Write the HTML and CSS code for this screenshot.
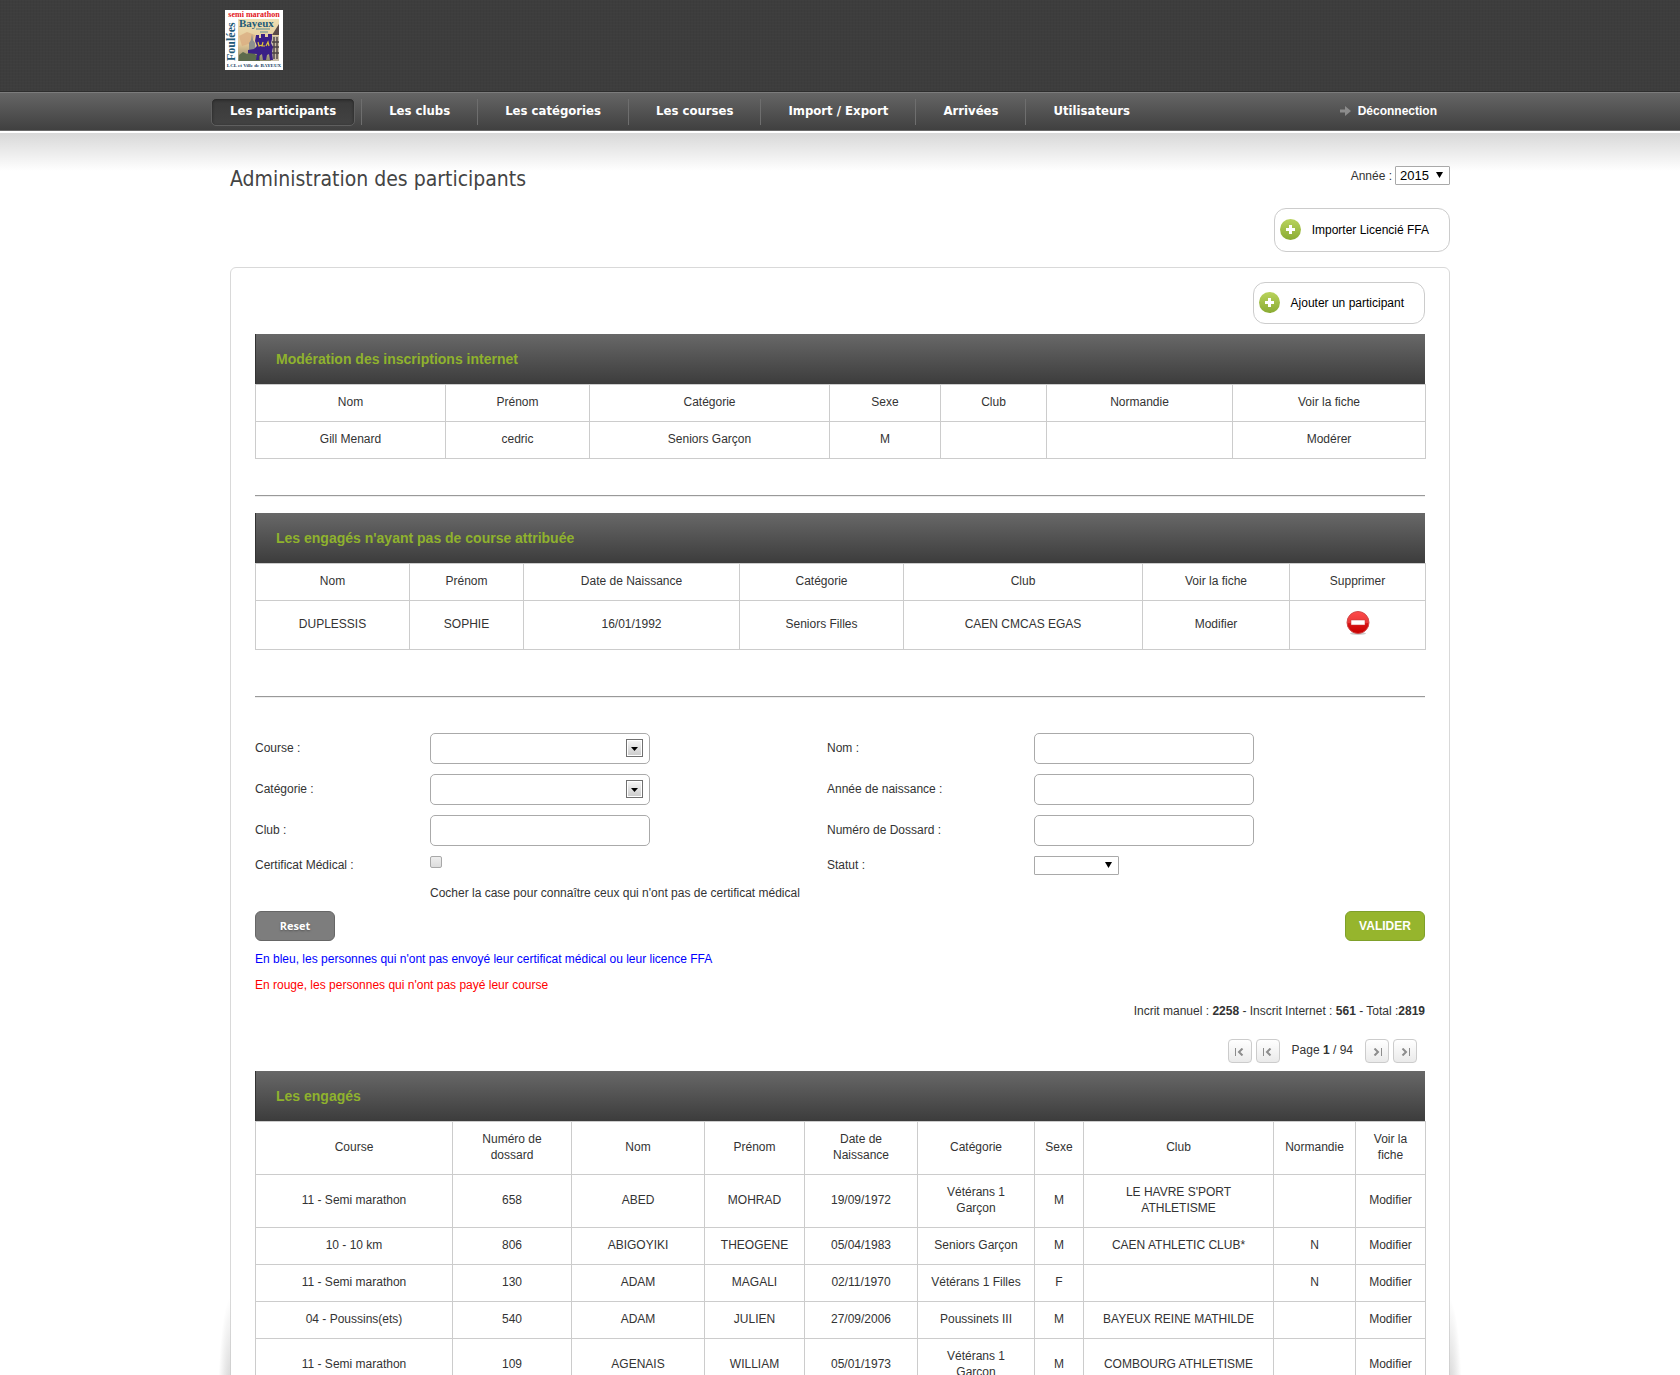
FILE: index.html
```html
<!DOCTYPE html>
<html lang="fr">
<head>
<meta charset="utf-8">
<meta name="viewport" content="width=device-width, initial-scale=1">
<title>Administration des participants</title>
<link rel="stylesheet" href="styles.css">
</head>
<body>
<div class="page">
  <header class="banner">
    <div class="wrap banner-inner">
      <a href="#" class="logo" aria-label="Foulées de Bayeux">
        <svg width="58" height="60" viewBox="0 0 58 60">
          <defs>
            <linearGradient id="sky" x1="0" y1="0" x2="0" y2="1"><stop offset="0" stop-color="#efe0b4"/><stop offset=".6" stop-color="#e3c896"/><stop offset="1" stop-color="#8d8a6c"/></linearGradient>
          </defs>
          <rect width="58" height="60" fill="#fff"/>
          <rect x="13" y="9" width="41" height="42" fill="url(#sky)"/>
          <path d="M14 26l8-4 8 3-3 8-10 3z" fill="#d9a97f" opacity=".7"/>
          <path d="M54 14l-7 11h7z" fill="#5b4a48"/>
          <path d="M46 26h8v25h-8z" fill="#c9bda6"/>
          <path d="M47 32h7M47 37h7M49 27v22M52 27v22M46 43h8" stroke="#4b4144" stroke-width="1.4"/>
          <path d="M27 24l1 6 2 3v12h-6V33l2-3z" fill="#8c8f8f"/>
          <path d="M14 45l4-3 4 2 4-3 5 4 4-2v8H14z" fill="#5c6a4c"/>
          <path d="M31 25h3v3h2v-4h4v3h3v-3h4v5l-1 4 2 4-1 5 1 8h-3l-1-6-2 1-1 5h-3l-1-6-3 2v4h-3l1-6-9-1v-3l6-1 3-3-2-5z" fill="#3a1f86"/>
          <path d="M33 32l1 4 3-1M38 32l-1 4h3M41 36l2-4 1 4" stroke="#e0c23a" fill="none" stroke-width="1.2"/>
          <path d="M31 19h14M35 22h8" stroke="#5f8b92" stroke-width="1"/>
          <text x="29" y="7" class="logo-top">semi marathon</text>
          <text x="14" y="17" class="logo-town">Bayeux</text>
          <text transform="translate(10 51) rotate(-90)" class="logo-side">Foulées</text>
          <text x="29" y="57" class="logo-foot">LCL et Ville de BAYEUX</text>
        </svg>
      </a>
    </div>
  </header>

  <div class="navbar">
    <div class="nav-inner">
      <nav aria-label="Menu principal">
        <ul class="menu">
          <li><a href="#" class="current" aria-current="page">Les participants</a></li>
          <li><a href="#">Les clubs</a></li>
          <li><a href="#">Les catégories</a></li>
          <li><a href="#">Les courses</a></li>
          <li><a href="#">Import / Export</a></li>
          <li><a href="#">Arrivées</a></li>
          <li><a href="#">Utilisateurs</a></li>
        </ul>
      </nav>
      <a href="#" class="logout">
        <svg width="11" height="10" viewBox="0 0 11 10" aria-hidden="true"><path d="M0 3.500h5V0l6 5-6 5V6.500H0z" fill="#8c8c8c"/></svg>
        Déconnection
      </a>
    </div>
  </div>

  <main class="content">
    <div class="wrap">
      <div class="page-head">
        <h1>Administration des participants</h1>
        <div class="year">
          <label for="annee">Année :</label>
          <select id="annee" class="mini year-select"><option>2015</option></select>
        </div>
      </div>
      <div class="actions actions-top">
        <a href="#" class="add add-tall">
          <svg class="plus" width="21" height="21" viewBox="0 0 21 21" aria-hidden="true">
            <defs><linearGradient id="leaf" x1="0" y1="0" x2="0" y2="1"><stop offset="0" stop-color="#b9d35c"/><stop offset="1" stop-color="#8aab33"/></linearGradient></defs>
            <circle cx="10.500" cy="10.500" r="10.500" fill="url(#leaf)"/><path d="M9 6h3v3h3v3h-3v3H9v-3H6V9h3z" fill="#fff"/>
          </svg>
          Importer Licencié FFA
        </a>
      </div>

      <section class="panel">
        <div class="actions">
          <a href="#" class="add">
            <svg class="plus" width="21" height="21" viewBox="0 0 21 21" aria-hidden="true">
              <circle cx="10.500" cy="10.500" r="10.500" fill="url(#leaf)"/><path d="M9 6h3v3h3v3h-3v3H9v-3H6V9h3z" fill="#fff"/>
            </svg>
            Ajouter un participant
          </a>
        </div>

        <h2 id="t-moderation" class="bar">Modération des inscriptions internet</h2>
        <table class="grid" aria-labelledby="t-moderation">
          <colgroup><col class="w190"><col class="w144"><col class="w240"><col class="w111"><col class="w106"><col class="w186"><col class="w193"></colgroup>
          <thead><tr><th>Nom</th><th>Prénom</th><th>Catégorie</th><th>Sexe</th><th>Club</th><th>Normandie</th><th>Voir la fiche</th></tr></thead>
          <tbody><tr><td>Gill Menard</td><td>cedric</td><td>Seniors Garçon</td><td>M</td><td></td><td></td><td><a href="#">Modérer</a></td></tr></tbody>
        </table>

        <hr class="rule">

        <h2 id="t-sans-course" class="bar">Les engagés n'ayant pas de course attribuée</h2>
        <table class="grid" aria-labelledby="t-sans-course">
          <colgroup><col class="w154"><col class="w114"><col class="w216"><col class="w164"><col class="w239"><col class="w147"><col class="w136"></colgroup>
          <thead><tr><th>Nom</th><th>Prénom</th><th>Date de Naissance</th><th>Catégorie</th><th>Club</th><th>Voir la fiche</th><th>Supprimer</th></tr></thead>
          <tbody><tr><td>DUPLESSIS</td><td>SOPHIE</td><td>16/01/1992</td><td>Seniors Filles</td><td>CAEN CMCAS EGAS</td><td><a href="#">Modifier</a></td>
            <td><button type="button" class="delete" aria-label="Supprimer">
              <svg width="24" height="24" viewBox="0 0 24 24" aria-hidden="true">
                <defs><linearGradient id="stop" x1="0" y1="0" x2="0" y2="1"><stop offset="0" stop-color="#ff4a4a"/><stop offset=".5" stop-color="#e93a3a"/><stop offset=".55" stop-color="#d81414"/><stop offset="1" stop-color="#c80000"/></linearGradient></defs>
                <ellipse cx="12" cy="22.500" rx="8" ry="1.500" fill="#000" opacity=".2"/>
                <circle cx="12" cy="11.500" r="11" fill="url(#stop)" stroke="#d04a4a" stroke-width="1"/>
                <rect x="5" y="9" width="14" height="5" fill="#fff" stroke="#c33" stroke-width=".5"/>
              </svg></button></td></tr></tbody>
        </table>

        <hr class="rule rule-wide">

        <form class="search">
          <div class="fields">
            <label for="course">Course :</label>
            <select id="course" class="field pick"><option></option></select>
            <label for="nom">Nom :</label>
            <input id="nom" class="field" type="text">
            <label for="categorie">Catégorie :</label>
            <select id="categorie" class="field pick"><option></option></select>
            <label for="naissance">Année de naissance :</label>
            <input id="naissance" class="field" type="text">
            <label for="club">Club :</label>
            <input id="club" class="field" type="text">
            <label for="dossard">Numéro de Dossard :</label>
            <input id="dossard" class="field" type="text">
            <label for="certificat">Certificat Médical :</label>
            <input id="certificat" class="tick" type="checkbox" aria-describedby="aide-certificat">
            <label for="statut">Statut :</label>
            <select id="statut" class="mini status-select"><option></option></select>
            <p id="aide-certificat" class="hint">Cocher la case pour connaître ceux qui n'ont pas de certificat médical</p>
          </div>
          <div class="buttons">
            <button type="reset" class="btn btn-reset">Reset</button>
            <button type="submit" class="btn btn-submit">VALIDER</button>
          </div>
        </form>

        <div class="notes">
          <p class="blue">En bleu, les personnes qui n'ont pas envoyé leur certificat médical ou leur licence FFA</p>
          <p class="red">En rouge, les personnes qui n'ont pas payé leur course</p>
          <p class="totals">Incrit manuel : <b>2258</b> - Inscrit Internet : <b>561</b> - Total :<b>2819</b></p>
        </div>

        <nav class="pager" aria-label="Pagination">
          <button type="button" aria-label="Première page"><svg width="9" height="8" viewBox="0 0 9 8"><path class="stem" d="M.5 0v8"/><path d="M7.500 .5L4 4l3.500 3.500"/></svg></button>
          <button type="button" aria-label="Page précédente"><svg width="9" height="8" viewBox="0 0 9 8"><path class="stem" d="M.5 0v8"/><path d="M7.500 .5L4 4l3.500 3.500"/></svg></button>
          <span class="page-no">Page <b>1</b> / 94</span>
          <button type="button" aria-label="Page suivante"><svg width="9" height="8" viewBox="0 0 9 8"><path class="stem" d="M8.500 0v8"/><path d="M1.500 .5L5 4 1.500 7.500"/></svg></button>
          <button type="button" aria-label="Dernière page"><svg width="9" height="8" viewBox="0 0 9 8"><path class="stem" d="M8.500 0v8"/><path d="M1.500 .5L5 4 1.500 7.500"/></svg></button>
        </nav>

        <h2 id="t-engages" class="bar">Les engagés</h2>
        <table class="grid" aria-labelledby="t-engages">
          <colgroup><col class="w197"><col class="w119"><col class="w133"><col class="w100"><col class="w113"><col class="w117"><col class="w49"><col class="w190"><col class="w82"><col class="w70"></colgroup>
          <thead><tr><th>Course</th><th>Numéro de dossard</th><th>Nom</th><th>Prénom</th><th>Date de Naissance</th><th>Catégorie</th><th>Sexe</th><th>Club</th><th>Normandie</th><th>Voir la fiche</th></tr></thead>
          <tbody>
            <tr><td>11 - Semi marathon</td><td>658</td><td>ABED</td><td>MOHRAD</td><td>19/09/1972</td><td>Vétérans 1 Garçon</td><td>M</td><td>LE HAVRE S'PORT ATHLETISME</td><td></td><td><a href="#">Modifier</a></td></tr>
            <tr><td>10 - 10 km</td><td>806</td><td>ABIGOYIKI</td><td>THEOGENE</td><td>05/04/1983</td><td>Seniors Garçon</td><td>M</td><td>CAEN ATHLETIC CLUB*</td><td>N</td><td><a href="#">Modifier</a></td></tr>
            <tr><td>11 - Semi marathon</td><td>130</td><td>ADAM</td><td>MAGALI</td><td>02/11/1970</td><td>Vétérans 1 Filles</td><td>F</td><td></td><td>N</td><td><a href="#">Modifier</a></td></tr>
            <tr><td>04 - Poussins(ets)</td><td>540</td><td>ADAM</td><td>JULIEN</td><td>27/09/2006</td><td>Poussinets III</td><td>M</td><td>BAYEUX REINE MATHILDE</td><td></td><td><a href="#">Modifier</a></td></tr>
            <tr><td>11 - Semi marathon</td><td>109</td><td>AGENAIS</td><td>WILLIAM</td><td>05/01/1973</td><td>Vétérans 1 Garçon</td><td>M</td><td>COMBOURG ATHLETISME</td><td></td><td><a href="#">Modifier</a></td></tr>
          </tbody>
        </table>
      </section>
    </div>
  </main>
</div>
</body>
</html>
```
FILE: styles.css
```css
* { box-sizing: border-box; }

body {
  margin: 0;
  background: #fff;
  color: #333;
  font: 12px/16px "Liberation Sans", Arial, sans-serif;
}

a { color: inherit; text-decoration: none; }
h1, h2, p, ul { margin: 0; padding: 0; }
input, select, button { margin: 0; font: inherit; color: inherit; }
svg { display: block; }

/* The page scrolls inside the window without a visible scrollbar */
.page {
  height: 100vh;
  overflow-x: hidden;
  overflow-y: auto;
  scrollbar-width: none;
}

.wrap { max-width: 1220px; margin: 0 auto; }

/* Banner */
.banner {
  background-color: #3d3d3d;
  background-image:
    repeating-linear-gradient(0deg, rgba(255,255,255,.01) 0 1px, transparent 1px 3px),
    repeating-linear-gradient(90deg, rgba(0,0,0,.03) 0 1px, transparent 1px 3px);
  border-bottom: 1px solid #2e2e2e;
}
.banner-inner { display: flex; max-width: 1230px; padding: 10px 0 21px; }
.logo-top, .logo-town, .logo-side, .logo-foot { font-family: "Liberation Serif", serif; font-weight: bold; }
.logo-top { font-size: 8px; fill: #e2141c; text-anchor: middle; }
.logo-town { font-size: 11px; fill: #1f5a78; }
.logo-side { font-size: 12px; fill: #1f5a78; }
.logo-foot { font-size: 5px; fill: #173f66; text-anchor: middle; }

/* Navigation */
.navbar {
  background: linear-gradient(#656565, #404040);
  border-top: 1px solid #7c7c7c;
  border-bottom: 1px solid #6a6a6a;
}
.nav-inner {
  display: flex;
  align-items: center;
  justify-content: space-between;
  max-width: 1258px;
  height: 37px;
  margin: 0 auto;
  padding-right: 32px;
}
.menu {
  display: flex;
  align-items: center;
  list-style: none;
  font: bold 13px/26px "DejaVu Sans Condensed", "Noto Sans", sans-serif;
  color: #fff;
}
.menu li + li { padding: 0 27px; border-left: 1px solid #6e6e6e; }
.menu li:first-child { padding-right: 6px; }
.menu a { display: block; }
.menu li + li a { padding-bottom: 2px; line-height: 24px; }
.menu .current {
  padding: 0 18px;
  border: 1px solid #5f5f5f;
  border-radius: 5px;
  background: linear-gradient(#3a3a3a, #424242);
  box-shadow: inset 0 1px 3px #222;
  padding-bottom: 2px;
  line-height: 24px;
}
.logout { display: flex; align-items: center; gap: 7px; padding-bottom: 2px; color: #fff; font-weight: bold; }

/* Main area */
.content {
  margin-top: 2px;
  padding: 33px 20px 0;
  background: linear-gradient(#d8d8d8, #fff 38px);
}
.page-head { display: flex; justify-content: space-between; height: 19px; }
h1 { font: 21px/26px "DejaVu Sans Condensed", "Noto Sans", sans-serif; color: #444; }
.year { display: flex; align-items: center; gap: 3px; }

.mini {
  appearance: none;
  height: 19px;
  padding: 0 4px;
  border: 1px solid #a9a9a9;
  border-radius: 1px;
  background: #fff url("data:image/svg+xml,%3Csvg xmlns='http://www.w3.org/2000/svg' width='7' height='6'%3E%3Cpath d='M0 0h7L3.500 6z'/%3E%3C/svg%3E") no-repeat right 6px top 5px;
  color: #000;
}
.year-select { width: 55px; font-size: 13px; line-height: 17px; }
.status-select { width: 85px; }

.actions { display: flex; justify-content: flex-end; }
.actions-top { margin-top: 23px; }
.add {
  display: flex;
  align-items: center;
  gap: 11px;
  height: 42px;
  padding: 0 20px 1px 5px;
  border: 1px solid #ccc;
  border-radius: 12px;
  background: #fff;
  color: #000;
}
.add-tall { height: 44px; }

.panel {
  position: relative;
  margin-top: 15px;
  padding: 14px 24px 36px;
  border: 1px solid #d9d9d9;
  border-radius: 6px;
  background: #fff;
}
/* Curled-page shadow on both lower edges of the panel */
.panel::before, .panel::after {
  content: "";
  position: absolute;
  bottom: 20px;
  width: 13px;
  height: 110px;
}
.panel::before { right: 100%; background: radial-gradient(ellipse 100% 100% at 100% 100%, #ccc, transparent); }
.panel::after { left: 100%; background: radial-gradient(ellipse 100% 100% at 0 100%, #ccc, transparent); }

.bar {
  padding: 0 20px;
  border-left: 1px solid #333;
  background: linear-gradient(#686868, #3c3c3c);
  color: #8fb22d;
  font-size: 14px;
  line-height: 50px;
}
.actions + .bar { margin-top: 10px; }

/* Data tables */
.grid {
  width: calc(100% + 1px);
  table-layout: fixed;
  border-collapse: collapse;
  text-align: center;
}
.grid th, .grid td { height: 37px; padding: 9px 8px 11px; border: 1px solid #ccc; font-weight: normal; vertical-align: middle; }
.w49 { width: 49px; } .w70 { width: 70px; } .w82 { width: 82px; } .w100 { width: 100px; }
.w106 { width: 106px; } .w111 { width: 111px; } .w113 { width: 113px; } .w114 { width: 114px; }
.w117 { width: 117px; } .w119 { width: 119px; } .w133 { width: 133px; } .w136 { width: 136px; }
.w144 { width: 144px; } .w147 { width: 147px; } .w154 { width: 154px; } .w164 { width: 164px; }
.w186 { width: 186px; } .w190 { width: 190px; } .w193 { width: 193px; } .w197 { width: 197px; }
.w216 { width: 216px; } .w239 { width: 239px; } .w240 { width: 240px; }

.delete { display: block; margin: 0 auto; padding: 1px 0 3px; border: 0; background: none; }

.rule { height: 2px; margin: 36px 0 16px; border: 0; border-top: 1px solid #999; background: #eee; }
.rule-wide { margin: 46px 0 35px; }

/* Search form */
.fields {
  display: grid;
  grid-template-columns: 175fr 397fr 207fr 391fr;
  row-gap: 10px;
  align-items: center;
}
.fields label { padding-bottom: 2px; }
.field {
  width: 220px;
  height: 31px;
  padding: 0 8px;
  border: 1px solid #aaa;
  border-radius: 5px;
  background: #fff;
}
.pick {
  appearance: none;
  background: #fff url("data:image/svg+xml,%3Csvg xmlns='http://www.w3.org/2000/svg' width='17' height='18'%3E%3ClinearGradient id='g' x2='0' y2='1'%3E%3Cstop stop-color='%23f4f4f4'/%3E%3Cstop offset='1' stop-color='%23cdcdcd'/%3E%3C/linearGradient%3E%3Cpath fill='%23707070' d='M0 0h17v18H0z'/%3E%3Cpath fill='%23fff' d='M1 1h15v16H1z'/%3E%3Cpath fill='url(%23g)' d='M2 2h13v14H2z'/%3E%3Cpath d='M5 8h7l-3.500 4z'/%3E%3C/svg%3E") no-repeat right 6px top 5px;
}
.tick {
  appearance: none;
  align-self: start;
  width: 12px;
  height: 12px;
  border: 1px solid #a8a8a8;
  border-radius: 2px;
  background: linear-gradient(#eee, #dcdcdc);
}
.hint { grid-column: 2 / -1; }

.buttons { display: flex; justify-content: space-between; margin-top: 10px; }
.btn { width: 80px; height: 30px; padding: 0; border-radius: 6px; color: #fff; font-weight: bold; }
.btn-reset { border: 1px solid #666; background: #7d7d7d; font-family: "Open Sans", sans-serif; font-size: 11px; text-shadow: 0 1px 2px #555; }
.btn-submit { border: 1px solid #7fa02a; background: #96b52d; }

.notes { display: grid; gap: 10px; margin-top: 10px; }
.blue { color: #00f; }
.red { color: #f00; }
.totals { text-align: right; }

.pager {
  display: flex;
  justify-content: flex-end;
  align-items: center;
  gap: 4px;
  margin: 20px 8px 8px 0;
}
.pager button {
  display: grid;
  place-items: center;
  width: 24px;
  height: 24px;
  padding: 1px 0 0;
  border: 1px solid #ccc;
  border-radius: 4px;
  background: linear-gradient(#fff, #eaeaea);
}
.pager path { fill: none; stroke: #8c8c8c; stroke-width: 2; }
.pager .stem { stroke-width: 1; }
.page-no { margin: 0 8px; padding-bottom: 3px; }
```
